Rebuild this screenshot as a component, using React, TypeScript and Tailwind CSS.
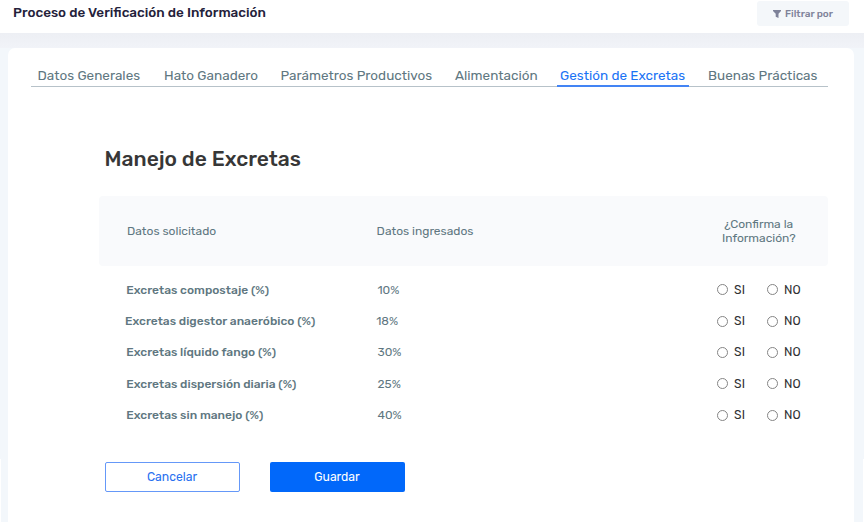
import { Fragment } from 'react';

const tabs = [
  { label: 'Datos Generales', cls: 'ml-[6.5px] w-[126.5px]' },
  { label: 'Hato Ganadero', cls: 'w-[116.5px]' },
  { label: 'Parámetros Productivos', cls: 'w-[174.5px]' },
  { label: 'Alimentación', cls: 'w-[105px]' },
  { label: 'Gestión de Excretas', cls: 'w-[151px]', active: true },
  { label: 'Buenas Prácticas', cls: 'w-[112px]' },
];

const rows = [
  { label: 'Excretas compostaje (%)', value: '10%', offset: 'ml-[27.3px]' },
  { label: 'Excretas digestor anaeróbico (%)', value: '18%', offset: 'ml-[26px]' },
  { label: 'Excretas líquido fango (%)', value: '30%', offset: 'ml-[27.3px]' },
  { label: 'Excretas dispersión diaria (%)', value: '25%', offset: 'ml-[27.3px]' },
  { label: 'Excretas sin manejo (%)', value: '40%', offset: 'ml-[27.3px]' },
];

function Radio({ name, label }: { name: string; label: string }) {
  return (
    <label className="flex items-center text-[12.1px] text-[#303134]">
      <input
        type="radio"
        name={name}
        className="mr-[6px] size-[11px] appearance-none rounded-full border border-[#858585] bg-white checked:bg-[#0168fa]"
      />
      {label}
    </label>
  );
}

export default function App() {
  return (
    <div className="flex h-[522px] w-[864px] flex-col overflow-hidden bg-[#f3f7fb] font-['Rubik','Roboto',sans-serif] whitespace-nowrap text-[#607781]">
      <header className="flex h-[33px] shrink-0 items-start justify-between bg-white pr-[15px] pl-[13px]">
        <h1 className="mt-[2px] text-[13.5px] leading-[20px] font-medium text-[#24213a]">
          Proceso de Verificación de Información
        </h1>
        <button className="mt-px flex h-[25px] w-[92px] items-center justify-center rounded-[3px] bg-[#f4f7fa] pt-px text-[10px] font-medium text-[#7e8299]">
          <svg width="8" height="8" viewBox="0 0 8 8" className="mr-[4px] -mt-px" fill="#7e8299">
            <path d="M0 0h8v1L5.5 3.8V8L2.7 6.8v-3L0 1z" />
          </svg>
          Filtrar por
        </button>
      </header>
      <div className="h-[15px] shrink-0 bg-linear-to-b from-[#edeff4] to-[#f1f3f8]" />
      <div className="flex h-[474px]">
        <div className="flex w-[7.5px] items-end">
          <div className="h-[63px] w-px bg-white" />
        </div>
        <main className="h-[474px] w-[846.5px] rounded-t-[7px] bg-white pl-[24.5px]">
          <nav className="-ml-px flex h-[39px] w-[797px] border-b border-[#b7c2c9] pt-[18px] text-[13.5px] leading-[19px]">
            {tabs.map((tab) => (
              <Fragment key={tab.label}>
                {tab.active ? (
                  <a className={`-ml-[3px] ${tab.cls}`}>
                    <span className="flex h-[21px] w-[132px] border-b-2 border-[#4384f4] pl-[3px] text-[#1a73f5]">
                      {tab.label}
                    </span>
                  </a>
                ) : (
                  <a className={tab.cls}>{tab.label}</a>
                )}
              </Fragment>
            ))}
          </nav>
          <h2 className="mt-[58px] ml-[72.5px] h-[28px] text-[21px] leading-[28px] font-medium text-[#373737]">
            Manejo de Excretas
          </h2>
          <div className="mt-[23px] ml-[67px] flex h-[70px] w-[729px] items-center rounded-[4px] bg-[#f9fafc] text-[12px]">
            <span className="ml-[28px] w-[250.5px]">Datos solicitado</span>
            <span className="w-[311px]">Datos ingresados</span>
            <span className="w-[142px] pt-px pl-[3px] text-center leading-[13.5px]">
              ¿Confirma la
              <br />
              Información?
            </span>
          </div>
          <div className="mt-[8px] ml-[67px]">
            {rows.map((row) => (
              <div key={row.label} className="flex h-[31.4px] items-center text-[12px]">
                <span className={`${row.offset} w-[251.2px] font-medium`}>{row.label}</span>
                <span className="flex-1">{row.value}</span>
                <div className="mr-[46.9px] flex w-[90px]">
                  <div className="w-[50px]">
                    <Radio name={row.label} label="SI" />
                  </div>
                  <Radio name={row.label} label="NO" />
                </div>
              </div>
            ))}
          </div>
          <div className="mt-[31px] ml-[72.5px] flex gap-[30px] text-[12.2px]">
            <button className="h-[30px] w-[135px] rounded-[2px] border border-[#6598f8] text-[#2870f0]">
              Cancelar
            </button>
            <button className="h-[30px] w-[135px] rounded-[2px] bg-[#0168fa] text-white">Guardar</button>
          </div>
        </main>
        <div className="flex w-[10px] items-end justify-end">
          <div className="h-[63px] w-px bg-white" />
        </div>
      </div>
    </div>
  );
}
